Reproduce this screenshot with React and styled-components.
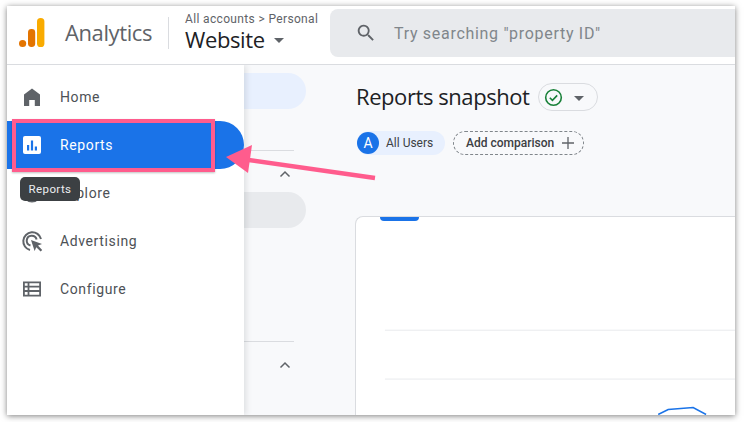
import React from "react";
import styled, { createGlobalStyle } from "styled-components";

const Global = createGlobalStyle`
  html, body { margin: 0; padding: 0; background: #fff; }
  body { width: 744px; height: 422px; overflow: hidden; font-family: "Open Sans", "Noto Sans", sans-serif; }
  * { box-sizing: border-box; }
`;

const Page = styled.div`
  position: relative;
  width: 744px;
  height: 422px;
  padding: 6px 9px 7px 7px;
`;
const Frame = styled.div`
  width: 728px;
  height: 409px;
  display: flex;
  flex-direction: column;
  background: #f8f9fb;
  overflow: hidden;
  box-shadow: 0 1px 6px rgba(0, 0, 0, 0.5);
`;
const Header = styled.header`
  flex: none;
  height: 59px;
  padding-bottom: 5px;
  background: #fff;
  border-bottom: 1px solid #dadce0;
  display: flex;
  align-items: center;
  position: relative;
  z-index: 2;
`;
const LogoSlot = styled.div`
  display: flex;
  align-items: center;
  gap: 20px;
  margin-left: 12px;
  width: 149px;
`;
const ProductName = styled.span`
  font-family: "Open Sans", sans-serif;
  font-size: 22px;
  letter-spacing: -0.4px;
  margin-bottom: 2px;
  color: #5f6368;
`;
const Divider = styled.div`
  width: 1px;
  height: 32px;
  background: #dadce0;
  flex: none;
`;
const Crumbs = styled.div`
  width: 145px;
  margin-left: 16px;
  flex: none;
  display: flex;
  flex-direction: column;
`;
const CrumbPath = styled.div`
  font-family: Roboto, sans-serif;
  font-size: 12px;
  letter-spacing: 0.35px;
  line-height: 16px;
  margin-top: -2px;
  color: #5f6368;
  white-space: nowrap;
`;
const Property = styled.div`
  display: flex;
  align-items: center;
  gap: 9px;
  margin-top: -1px;
  font-family: "Open Sans", sans-serif;
  font-size: 22px;
  line-height: 26px;
  letter-spacing: -0.38px;
  color: #202124;
`;
const Caret = styled.span`
  width: 0;
  height: 0;
  border-left: ${(p) => p.$size}px solid transparent;
  border-right: ${(p) => p.$size}px solid transparent;
  border-top: ${(p) => p.$size}px solid #5f6368;
  margin-top: 2px;
`;
const SearchBox = styled.div`
  flex: 1;
  height: 48px;
  background: #e8eaed;
  border-radius: 8px 0 0 8px;
  display: flex;
  align-items: center;
  gap: 17px;
  padding-left: 25px;
`;
const Placeholder = styled.span`
  font-family: Roboto, sans-serif;
  font-size: 16px;
  letter-spacing: 0.7px;
  margin-top: 1px;
  color: #80868b;
`;
const Body = styled.div`
  flex: 1;
  min-height: 0;
  display: flex;
`;
const Sidebar = styled.nav`
  flex: none;
  width: 237px;
  background: #fff;
  padding-top: 8px;
  box-shadow: 2px 0 6px rgba(60, 64, 67, 0.14);
  position: relative;
  z-index: 1;
`;
const NavItem = styled.div`
  height: 48px;
  display: flex;
  align-items: center;
  gap: 17px;
  padding-left: 14px;
  border-radius: 0 24px 24px 0;
  font-family: Roboto, sans-serif;
  font-size: 14px;
  font-weight: 400;
  letter-spacing: 0.62px;
  background: ${(p) => (p.$active ? "#1a73e8" : "transparent")};
  color: ${(p) => (p.$active ? "#fff" : "#4d5156")};
`;
const NavIcon = styled.svg`
  width: 22px;
  height: 22px;
  flex: none;
`;
const SubNav = styled.aside`
  flex: none;
  width: 111px;
  display: flex;
  flex-direction: column;
  padding-top: 8px;
`;
const SubPill = styled.div`
  width: 62px;
  height: 36px;
  flex: none;
  border-radius: 0 18px 18px 0;
  background: ${(p) => p.$bg};
  margin-bottom: ${(p) => p.$after}px;
`;
const SubLine = styled.div`
  width: 50px;
  height: 1px;
  flex: none;
  background: #dadce0;
`;
const SubChevron = styled.svg`
  width: 14px;
  height: 14px;
  flex: none;
  margin: ${(p) => p.$top}px 0 ${(p) => p.$bottom}px 34px;
`;
const Main = styled.main`
  flex: 1;
  min-width: 0;
  display: flex;
  flex-direction: column;
`;
const TitleRow = styled.div`
  height: 28px;
  margin-top: 18px;
  display: flex;
  align-items: center;
  gap: 8px;
  padding-left: 1px;
`;
const Title = styled.h1`
  margin: 0 0 3px;
  font-family: "Open Sans", sans-serif;
  font-weight: 400;
  font-size: 22px;
  letter-spacing: -0.43px;
  color: #202124;
`;
const StatusPill = styled.div`
  width: 60px;
  height: 28px;
  border: 1px solid #dadce0;
  border-radius: 14px;
  display: flex;
  align-items: center;
  gap: 11px;
  padding-left: 5px;
`;
const ChipRow = styled.div`
  display: flex;
  gap: 8px;
  margin-top: 20px;
  padding-left: 2px;
`;
const UserChip = styled.div`
  width: 88px;
  height: 24px;
  border-radius: 12px;
  background: #e8f0fe;
  display: flex;
  align-items: center;
  gap: 7px;
  font-family: Roboto, sans-serif;
  font-size: 12px;
  color: #3c4043;
`;
const Avatar = styled.span`
  width: 22px;
  height: 22px;
  border-radius: 50%;
  background: #1a73e8;
  color: #fff;
  display: flex;
  align-items: center;
  justify-content: center;
  font-size: 14px;
  font-weight: 400;
`;
const AddChip = styled.div`
  width: 131px;
  height: 24px;
  border-radius: 12px;
  border: 1px dashed #80868b;
  display: flex;
  align-items: center;
  gap: 7px;
  padding-left: 12px;
  font-family: Roboto, sans-serif;
  font-size: 12px;
  font-weight: 500;
  color: #3c4043;
`;
const Card = styled.section`
  flex: 1;
  margin-top: 61px;
  background: #fff;
  border: 1px solid #dadce0;
  border-right: 0;
  border-bottom: 0;
  border-radius: 8px 0 0 0;
  display: flex;
  flex-direction: column;
  min-height: 0;
`;
const TabMark = styled.div`
  width: 39px;
  height: 4px;
  flex: none;
  margin-left: 24px;
  background: #1a73e8;
  border-radius: 0 0 4px 4px;
`;
const Chart = styled.svg`
  display: block;
  flex: 1;
  width: 100%;
  min-height: 0;
`;
const Overlay = styled.svg`
  position: absolute;
  left: 0;
  top: 0;
  z-index: 3;
  width: 744px;
  height: 422px;
  pointer-events: none;
`;
const Highlight = styled.div`
  position: absolute;
  z-index: 3;
  left: 12px;
  top: 119px;
  width: 203px;
  height: 53px;
  border: 4px solid #ff5c8d;
  box-shadow: 0 1px 2px rgba(0, 0, 0, 0.25);
`;
const Tooltip = styled.div`
  position: absolute;
  z-index: 4;
  left: 20px;
  top: 177px;
  width: 60px;
  height: 24px;
  border-radius: 5px;
  background: #3c4043;
  color: #eceef0;
  display: flex;
  align-items: center;
  justify-content: center;
  font-family: Roboto, sans-serif;
  font-size: 11.5px;
  letter-spacing: 0.4px;
`;

const HomeIcon = () => (
  <NavIcon viewBox="0 0 22 22">
    <path fill="#5f6368" d="M11 2.5 3 8.4V20h5.2v-6h5.6v6H19V8.4z" />
  </NavIcon>
);
const ReportsIcon = () => (
  <NavIcon viewBox="0 0 22 22">
    <rect x="2" y="2" width="18" height="18" rx="2" fill="#fff" />
    <path fill="#1a73e8" d="M6 11h2.2v5.5H6zM9.900 6.500h2.200v10H9.900zM13.800 12.500H16v4h-2.200z" />
  </NavIcon>
);
const ExploreIcon = () => (
  <NavIcon viewBox="0 0 22 22">
    <circle cx="11" cy="11" r="8.5" fill="none" stroke="#5f6368" strokeWidth="2" />
  </NavIcon>
);
const AdvertisingIcon = () => (
  <NavIcon viewBox="0 0 22 22">
    <g fill="none" stroke="#5f6368" strokeWidth="2">
      <path d="M9 20A9 9 0 1 1 20 9" />
      <path d="M9.500 15.500A5 5 0 1 1 15.600 9.500" />
    </g>
    <path fill="#5f6368" d="m10 10 11 4-4 1.600 4.200 4.400-1.600 1.600-4.300-4.400L13.600 21z" />
  </NavIcon>
);
const ConfigureIcon = () => (
  <NavIcon viewBox="0 0 22 22">
    <path
      fill="#5f6368"
      fillRule="evenodd"
      d="M2 3.500h18v15H2zM3.800 5.300v2.400h2.800V5.300zm4.600 0v2.400h9.800V5.300zM3.800 9.600V12h2.800V9.600zm4.600 0V12h9.800V9.600zM3.800 14v2.700h2.800V14zm4.600 0v2.700h9.800V14z"
    />
  </NavIcon>
);

const Chevron = (props) => (
  <SubChevron viewBox="0 0 14 14" {...props}>
    <path d="M2.500 9.500 7 5l4.500 4.500" fill="none" stroke="#5f6368" strokeWidth="1.500" />
  </SubChevron>
);

export default function App() {
  return (
    <>
      <Global />
      <Page>
        <Frame>
          <Header>
            <LogoSlot>
              <svg width="26" height="30" viewBox="0 0 26 30">
                <circle cx="3.600" cy="25.500" r="3.600" fill="#e37400" />
                <rect x="9" y="11" width="7.200" height="18" rx="3.400" fill="#e37400" />
                <rect x="18" y="0" width="7.400" height="29" rx="3.600" fill="#f9ab00" />
              </svg>
              <ProductName>Analytics</ProductName>
            </LogoSlot>
            <Divider />
            <Crumbs>
              <CrumbPath>All accounts &gt; Personal</CrumbPath>
              <Property>
                Website
                <Caret $size={5} />
              </Property>
            </Crumbs>
            <SearchBox>
              <svg width="22" height="22" viewBox="0 0 24 24">
                <path
                  fill="#5f6368"
                  fillRule="evenodd"
                  d="M15.500 14h-.8l-.3-.3a6.500 6.500 0 1 0-.7.7l.3.3v.8l5 5 1.500-1.500zM9.500 14a4.500 4.500 0 1 1 0-9 4.500 4.500 0 0 1 0 9z"
                />
              </svg>
              <Placeholder>Try searching "property ID"</Placeholder>
            </SearchBox>
          </Header>
          <Body>
            <Sidebar>
              <NavItem><HomeIcon />Home</NavItem>
              <NavItem $active><ReportsIcon />Reports</NavItem>
              <NavItem><ExploreIcon />Explore</NavItem>
              <NavItem><AdvertisingIcon />Advertising</NavItem>
              <NavItem><ConfigureIcon />Configure</NavItem>
            </Sidebar>
            <SubNav>
              <SubPill $bg="#e8f0fe" $after={41} />
              <SubLine />
              <Chevron $top={16} $bottom={11} />
              <SubPill $bg="#e8eaed" $after={113} />
              <SubLine />
              <Chevron $top={16} $bottom={0} />
            </SubNav>
            <Main>
              <TitleRow>
                <Title>Reports snapshot</Title>
                <StatusPill>
                  <svg width="19" height="19" viewBox="0 0 18 18">
                    <circle cx="9" cy="9" r="7.400" fill="none" stroke="#188038" strokeWidth="1.500" />
                    <path d="m5.500 9.200 2.500 2.500 4.500-4.700" fill="none" stroke="#188038" strokeWidth="1.500" />
                  </svg>
                  <Caret $size={5} />
                </StatusPill>
              </TitleRow>
              <ChipRow>
                <UserChip>
                  <Avatar>A</Avatar>
                  All Users
                </UserChip>
                <AddChip>
                  Add comparison
                  <svg width="14" height="14" viewBox="0 0 14 14">
                    <path d="M7 1v12M1 7h12" stroke="#5f6368" strokeWidth="1.300" />
                  </svg>
                </AddChip>
              </ChipRow>
              <Card>
                <TabMark />
                <Chart viewBox="0 0 380 194" preserveAspectRatio="xMinYMin">
                  <path d="M29 109.500H380M29 158.500H380" stroke="#e8eaed" strokeWidth="1" />
                  <path d="M303 194l10-5 25-2 13 7" fill="none" stroke="#1a73e8" strokeWidth="1.600" />
                </Chart>
              </Card>
            </Main>
          </Body>
        </Frame>
        <Highlight />
        <Tooltip>Reports</Tooltip>
        <Overlay viewBox="0 0 744 422">
          <path d="M375 178 245 159.500" stroke="#ff5c8d" strokeWidth="4.500" fill="none" />
          <path d="M226 157 252 145 248 173z" fill="#ff5c8d" />
        </Overlay>
      </Page>
    </>
  );
}
